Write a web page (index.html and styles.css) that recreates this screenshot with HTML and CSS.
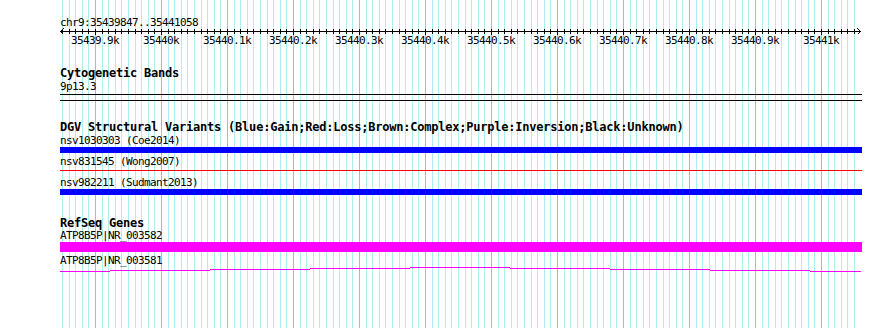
FILE: index.html
```html
<!DOCTYPE html>
<html>
<head>
<meta charset="utf-8">
<link rel="stylesheet" href="styles.css">
</head>
<body>
<div class="page">
  <div class="grid"></div>
  <div class="content">
    <div class="sm chrlabel">chr9:35439847..35441058</div>
    <div class="ruler">
      <svg class="ruler-svg" width="802" height="7" viewBox="0 0 802 7" shape-rendering="crispEdges">
        <line x1="0" y1="3.5" x2="801" y2="3.5" stroke="#000" stroke-width="1"/>
        <polyline points="3.5,0.5 0.5,3.5 3.5,6.5" fill="none" stroke="#000" stroke-width="1"/>
        <polyline points="797.5,0.5 800.5,3.5 797.5,6.5" fill="none" stroke="#000" stroke-width="1"/>
      </svg>
    </div>
    <div class="sm ticklabels">
      <span>35439.9k</span><span>35440k</span><span>35440.1k</span><span>35440.2k</span><span>35440.3k</span><span>35440.4k</span><span>35440.5k</span><span>35440.6k</span><span>35440.7k</span><span>35440.8k</span><span>35440.9k</span><span>35441k</span>
    </div>

    <section class="track cyto">
      <div class="title">Cytogenetic Bands</div>
      <div class="sm">9p13.3</div>
      <div class="band"></div>
    </section>

    <section class="track dgv">
      <div class="title">DGV Structural Variants (Blue:Gain;Red:Loss;Brown:Complex;Purple:Inversion;Black:Unknown)</div>
      <div class="sm">nsv1030303 (Coe2014)</div>
      <div class="bar gain"></div>
      <div class="sm lbl2">nsv831545 (Wong2007)</div>
      <div class="loss"></div>
      <div class="sm lbl3">nsv982211 (Sudmant2013)</div>
      <div class="bar gain"></div>
    </section>

    <section class="track refseq">
      <div class="title">RefSeq Genes</div>
      <div class="sm glabel1">ATP8B5P|NR_003582</div>
      <div class="exon"></div>
      <div class="sm glabel2">ATP8B5P|NR_003581</div>
      <svg class="intron" width="802" height="6" viewBox="0 0 802 6" shape-rendering="crispEdges">
        <rect x="0" y="5" width="50" height="1" fill="#ff00ff"/>
        <rect x="50" y="4" width="100" height="1" fill="#ff00ff"/>
        <rect x="150" y="3" width="100" height="1" fill="#ff00ff"/>
        <rect x="250" y="2" width="100" height="1" fill="#ff00ff"/>
        <rect x="350" y="1" width="100" height="1" fill="#ff00ff"/>
        <rect x="450" y="2" width="100" height="1" fill="#ff00ff"/>
        <rect x="550" y="3" width="100" height="1" fill="#ff00ff"/>
        <rect x="650" y="4" width="100" height="1" fill="#ff00ff"/>
        <rect x="750" y="5" width="51" height="1" fill="#ff00ff"/>
      </svg>
    </section>
  </div>
</div>
</body>
</html>
```

FILE: styles.css
```css
html, body {
  margin: 0;
  padding: 0;
  background: #ffffff;
}

.page {
  position: relative;
  width: 890px;
  height: 328px;
  overflow: hidden;
  background: #ffffff;
}

.grid {
  position: absolute;
  left: 62px;
  top: 0;
  bottom: 0;
  width: 793px;
  background-image:
    repeating-linear-gradient(90deg, transparent 0 33px, #8cc4e0 33px 34px, transparent 34px 66px),
    repeating-linear-gradient(90deg, #aeeeee 0 1px, transparent 1px 6.6px);
}

.content {
  position: relative;
  padding-left: 60px;
  display: flex;
  flex-direction: column;
  align-items: flex-start;
}

.sm {
  font-family: "DejaVu Sans Mono", "Liberation Mono", monospace;
  font-size: 11px;
  letter-spacing: -0.62px;
  line-height: 13px;
  white-space: pre;
  color: #000;
}

.title {
  font-family: "DejaVu Sans Mono", "Liberation Mono", monospace;
  font-weight: bold;
  font-size: 12px;
  letter-spacing: -0.22px;
  line-height: 13px;
  white-space: pre;
  color: #000;
}

.chrlabel {
  margin-top: 17px;
  line-height: 11px;
}

.ruler {
  position: relative;
  width: 802px;
  height: 7px;
  background:
    repeating-linear-gradient(90deg, transparent 0 33px, #000 33px 34px, transparent 34px 66px) 2px 1px / 793px 6px no-repeat,
    repeating-linear-gradient(90deg, #000 0 1px, transparent 1px 6.6px) 2px 1px / 793px 5px no-repeat;
}

.ruler-svg {
  position: absolute;
  left: 0;
  top: 0;
  display: block;
}

.ticklabels {
  display: flex;
  margin-left: 2px;
  line-height: 11px;
}

.ticklabels span {
  width: 66px;
  text-align: center;
}

.track {
  display: flex;
  flex-direction: column;
  align-items: flex-start;
}

.cyto { margin-top: 21px; }
.dgv { margin-top: 20px; }
.refseq { margin-top: 22px; }

.band {
  margin-top: 1px;
  width: 802px;
  height: 5px;
  border-top: 1px solid #000;
  border-bottom: 1px solid #000;
}

.bar {
  width: 802px;
  height: 6px;
}

.gain { background: #0000ff; }

.lbl2 { margin-top: 2px; }

.loss {
  margin-top: 2px;
  width: 802px;
  height: 1px;
  background: #ff0000;
}

.lbl3 { margin-top: 5px; }

.glabel1 { line-height: 12px; }

.exon {
  width: 802px;
  height: 10px;
  background: #ff00ff;
}

.glabel2 {
  margin-top: 3px;
  line-height: 11px;
}

.intron {
  display: block;
}
```
